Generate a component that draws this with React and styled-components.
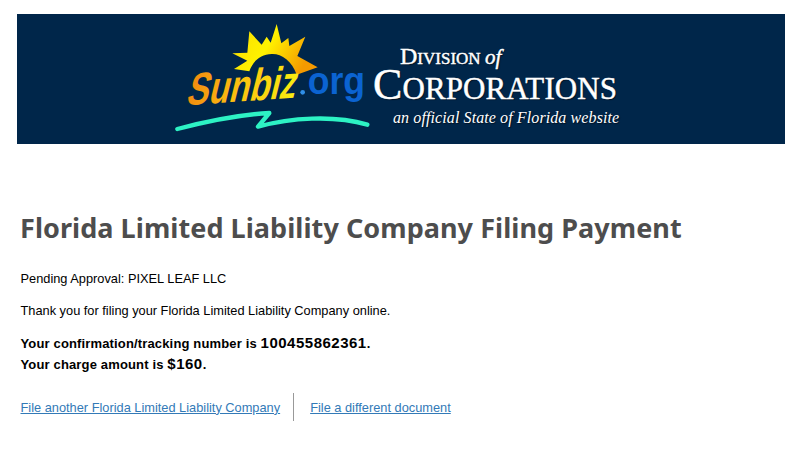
import styled, { createGlobalStyle } from "styled-components";

const GlobalStyle = createGlobalStyle`
  html, body {
    margin: 0;
    padding: 0;
    background: #ffffff;
    font-family: "Liberation Sans", Arial, sans-serif;
    font-size: 12.8px;
    color: #000000;
  }
`;

const Page = styled("div")({
  width: "793px",
  height: "475px",
  boxSizing: "border-box",
  padding: "14px 8px 0 17px",
  overflow: "hidden",
});

const Banner = styled("header")({
  display: "flex",
  alignItems: "flex-start",
  height: "130px",
  paddingLeft: "153px",
  backgroundColor: "#00264a",
});

const LogoSvg = styled("svg")({
  display: "block",
  flexShrink: 0,
});

const Wordmark = styled("div")({
  display: "flex",
  flexDirection: "column",
  marginLeft: "3px",
  paddingTop: "28px",
  fontFamily: '"Liberation Serif", "Times New Roman", serif',
  color: "#ffffff",
  textShadow: "1px 1px 1px rgba(0, 0, 0, 0.55)",
  whiteSpace: "nowrap",
  WebkitTextStroke: "0.45px #ffffff",
});

const Division = styled("div")({
  marginLeft: "27px",
  height: "24px",
  lineHeight: "28px",
  fontSize: "17px",
});

const Corporations = styled("div")({
  height: "37px",
  lineHeight: "37px",
  fontSize: "31px",
  letterSpacing: "0.1px",
});

const BigCap = styled("span")`
  font-size: ${(props) => props.size};
`;

const OfWord = styled("span")({
  fontStyle: "italic",
  fontSize: "21px",
});

const Tagline = styled("div")({
  marginLeft: "20px",
  marginTop: "5px",
  fontSize: "16px",
  lineHeight: "20px",
  fontStyle: "italic",
  letterSpacing: "0.1px",
  WebkitTextStroke: "0",
});

const Content = styled("main")({
  paddingLeft: "3.5px",
});

const Title = styled("h1")({
  margin: "66px 0 0 -0.5px",
  fontFamily: '"Noto Sans", "DejaVu Sans", sans-serif',
  fontSize: "27px",
  lineHeight: "36px",
  fontWeight: 700,
  letterSpacing: "0.06px",
  color: "#4d4d4d",
  whiteSpace: "nowrap",
});

const Line = styled("p")`
  margin: ${(props) => props.gap} 0 0;
  font-size: 12.8px;
  line-height: 14px;
`;

const Receipt = styled("div")({
  marginTop: "15px",
  fontSize: "13px",
  lineHeight: "21px",
  fontWeight: 700,
  letterSpacing: "0.15px",
});

const Figure = styled("span")({
  fontSize: "15px",
  lineHeight: 1,
  letterSpacing: "0.5px",
});

const Actions = styled("nav")({
  display: "flex",
  alignItems: "center",
  height: "28px",
  marginTop: "18px",
});

const ActionLink = styled("a")({
  color: "#337ab7",
  fontSize: "12.8px",
  textDecoration: "underline",
});

const Divider = styled("span")({
  width: "1px",
  height: "28px",
  margin: "0 16px 0 13px",
  backgroundColor: "#999999",
});

const Logo = () => (
  <LogoSvg width="200" height="130" viewBox="30 0 600 390">
    <defs>
      <linearGradient id="sunFill" x1="0" y1="0" x2="1" y2="0.35">
        <stop offset="0" stopColor="#f8dc00" />
        <stop offset="0.5" stopColor="#fff200" />
        <stop offset="1" stopColor="#f59a00" />
      </linearGradient>
      <linearGradient id="bizFill" x1="0" y1="0" x2="1" y2="0">
        <stop offset="0" stopColor="#f08a10" />
        <stop offset="0.45" stopColor="#fcc010" />
        <stop offset="1" stopColor="#f8ee10" />
      </linearGradient>
    </defs>
    <path
      d="M268 172 L222 165 L262 140 L217 118 L262 116 L268 52 L305 92 L320 68 L332 86 L350 30 L364 88 L385 72 L388 96 L436 68 L412 126 L473 160 L410 182 C396 140 362 118 335 120 C300 122 278 142 268 172 Z"
      fill="url(#sunFill)"
    />
    <g transform="translate(76 274) rotate(-4) skewX(-18)">
      <text
        fontFamily="'Liberation Sans', sans-serif"
        fontWeight="700"
        fontSize="135"
        fill="url(#bizFill)"
        textLength="328"
        lengthAdjust="spacingAndGlyphs"
      >
        Sunbiz
      </text>
    </g>
    <circle cx="428" cy="235" r="7" fill="#2f8fe8" />
    <text
      x="443"
      y="240"
      fontFamily="'Liberation Sans', sans-serif"
      fontWeight="700"
      fontSize="118"
      fill="#0b63d1"
      textLength="172"
      lengthAdjust="spacingAndGlyphs"
    >
      org
    </text>
    <path
      d="M52 345 C140 322 240 302 328 297 L294 338 C390 312 520 302 622 332"
      fill="none"
      stroke="#2df2c4"
      strokeWidth="13"
      strokeLinecap="round"
      strokeLinejoin="round"
    />
  </LogoSvg>
);

export default function App() {
  return (
    <>
      <GlobalStyle />
      <Page>
        <Banner>
          <Logo />
          <Wordmark>
            <Division>
              <BigCap size="24px">D</BigCap>IVISION <OfWord>of</OfWord>
            </Division>
            <Corporations>
              <BigCap size="44px">C</BigCap>ORPORATIONS
            </Corporations>
            <Tagline>an official State of Florida website</Tagline>
          </Wordmark>
        </Banner>
        <Content>
          <Title>Florida Limited Liability Company Filing Payment</Title>
          <Line gap="26px">Pending Approval: PIXEL LEAF LLC</Line>
          <Line gap="18px">Thank you for filing your Florida Limited Liability Company online.</Line>
          <Receipt>
            <div>
              Your confirmation/tracking number is <Figure>100455862361</Figure>.
            </div>
            <div>
              Your charge amount is <Figure>$160</Figure>.
            </div>
          </Receipt>
          <Actions>
            <ActionLink href="#another">File another Florida Limited Liability Company</ActionLink>
            <Divider />
            <ActionLink href="#different">File a different document</ActionLink>
          </Actions>
        </Content>
      </Page>
    </>
  );
}
